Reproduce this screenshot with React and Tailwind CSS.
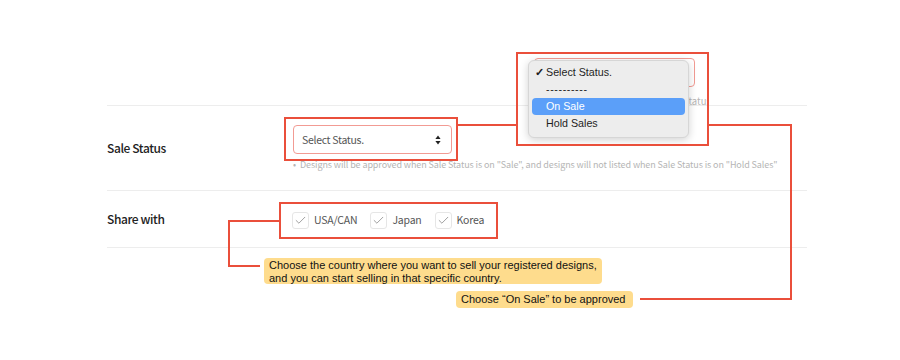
import { Check } from "lucide-react";

const sans = { fontFamily: "'Noto Sans CJK KR', 'Noto Sans', sans-serif" };
const mac = { fontFamily: "'Liberation Sans', Arial, sans-serif" };

function Checkbox({ label }) {
  return (
    <label className="flex items-center gap-[5px] text-[10.5px] tracking-[-0.2px] text-[#555]">
      <span className="w-[17px] h-[17px] border border-[#e6e6e6] rounded-[3px] bg-white flex items-center justify-center">
        <Check size={13} strokeWidth={1.3} className="text-[#777]" />
      </span>
      {label}
    </label>
  );
}

function SelectBox({ className = "" }) {
  return (
    <div
      className={
        "h-[29px] border border-[#f29b93] rounded-[4px] bg-white flex items-center justify-between pl-[8px] pr-[10px] text-[10.5px] tracking-[-0.3px] text-[#555] " +
        className
      }
    >
      <span>Select Status.</span>
      <svg width="6" height="10" viewBox="0 0 6 10">
        <path d="M3 0.5 L5.6 4 H0.4 Z" fill="#222" />
        <path d="M3 9.5 L5.6 6 H0.4 Z" fill="#222" />
      </svg>
    </div>
  );
}

function Note({ children, className = "" }) {
  return (
    <div
      className={"rounded-[4px] bg-[#fedc8d] px-[5px] text-[11px] leading-[12.5px] text-[#111] whitespace-nowrap " + className}
      style={mac}
    >
      {children}
    </div>
  );
}

export default function App() {
  return (
    <div className="relative w-[900px] h-[360px] bg-white overflow-hidden" style={sans}>
      <div className="ml-[107px] mt-[105px] w-[700px] text-[#222]">
        <div className="flex h-[85px] border-t border-[#ededed]">
          <div className="w-[186px] shrink-0 flex items-center text-[12px] font-medium tracking-[-0.4px]">
            Sale Status
          </div>
          <div className="pt-[19px]">
            <SelectBox className="w-[159px]" />
            <p className="mt-[4px] text-[9px] tracking-[-0.1px] text-[#b5b5b5] whitespace-nowrap">
              <span className="mr-[4px]">•</span>
              Designs will be approved when Sale Status is on "Sale", and designs will not listed when Sale Status is on "Hold Sales"
            </p>
          </div>
        </div>
        <div className="flex h-[58px] border-y border-[#ededed]">
          <div className="w-[185px] shrink-0 flex items-center text-[12px] font-medium tracking-[-0.4px]">
            Share with
          </div>
          <div className="flex items-center gap-[13px] pt-[2px]">
            <Checkbox label="USA/CAN" />
            <Checkbox label="Japan" />
            <Checkbox label="Korea" />
          </div>
        </div>
      </div>

      {/* red callout frames and connectors */}
      <svg className="absolute inset-0 pointer-events-none" width="900" height="360">
        <g fill="none" stroke="#ea4f3b" strokeWidth="2">
          <rect x="285" y="118" width="172" height="42" />
          <rect x="280" y="203" width="217" height="35" />
          <path d="M457 125 H517" />
          <path d="M708 125 H791 V299 H640" />
          <path d="M280 221 H229 V266 H260" />
        </g>
      </svg>

      {/* zoomed crop of the open select */}
      <div className="absolute left-[516px] top-[52px] w-[193px] h-[94px] border-2 border-[#ea4f3b] bg-white overflow-hidden">
        <div className="absolute left-0 right-0 top-[51px] h-px bg-[#ededed]" />
        <SelectBox className="absolute left-[16px] top-[4px] w-[161px]" />
        <span className="absolute left-[144px] top-[40px] text-[9.5px] text-[#b5b5b5] whitespace-nowrap">Sale Status</span>
        <div
          className="absolute left-[10px] top-[6px] w-[161px] h-[78px] rounded-[6px] bg-[#ededed] border border-[#d6d6d6] shadow-[0_2px_8px_rgba(0,0,0,0.18)] px-[3px] pt-[3px] text-[10.7px] text-[#1e1e1e]"
          style={mac}
        >
          <div className="h-[17px] flex items-center pl-[3px]">
            <span className="w-[11px] text-[11px] font-bold">✓</span>Select Status.
          </div>
          <div className="h-[17px] flex items-center pl-[14px] tracking-[0.6px]">----------</div>
          <div className="h-[17px] flex items-center pl-[14px] rounded-[4px] bg-[#5b9ff9] text-white">On Sale</div>
          <div className="h-[17px] flex items-center pl-[14px]">Hold Sales</div>
        </div>
      </div>

      <Note className="absolute left-[264px] top-[258px] h-[26px] pt-[1px]">
        Choose the country where you want to sell your registered designs,
        <br />
        and you can start selling in that specific country.
      </Note>
      <Note className="absolute left-[456px] top-[291px] w-[177px] h-[17px] flex items-center">
        Choose “On Sale” to be approved
      </Note>
    </div>
  );
}
